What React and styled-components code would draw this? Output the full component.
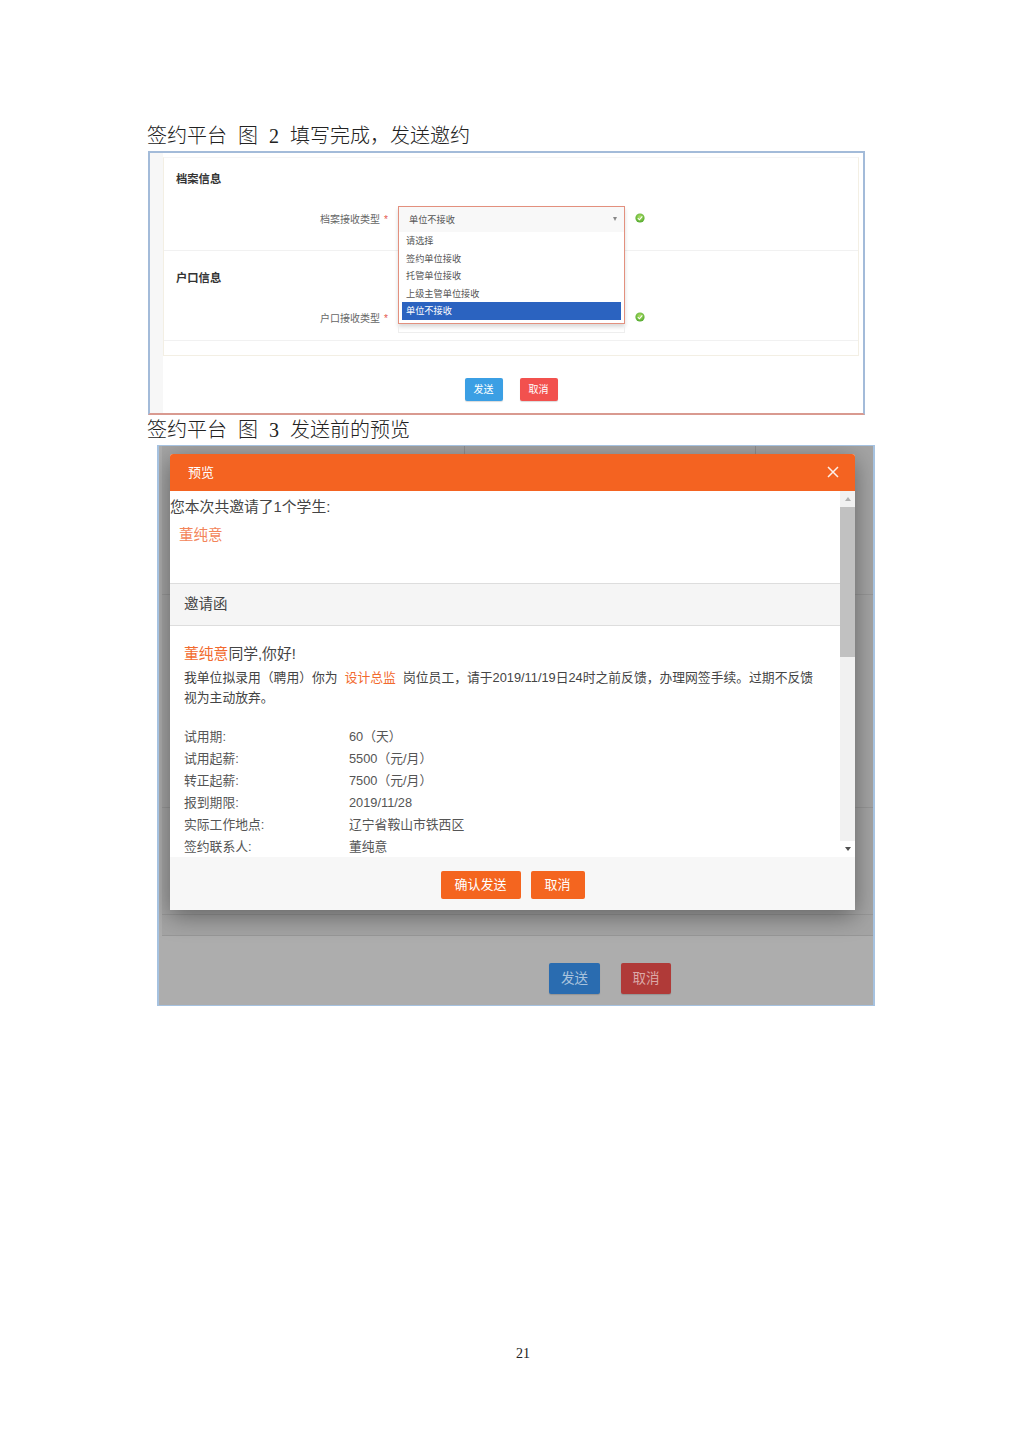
import React from "react";
import styled, { createGlobalStyle } from "styled-components";

const GlobalStyle = createGlobalStyle`
  html, body { margin: 0; padding: 0; background: #fff; }
  * { box-sizing: border-box; }
  body { font-family: "Liberation Sans", "Noto Sans CJK SC", sans-serif; color: #333; }
`;

const Page = styled.div`
  width: 1024px;
  height: 1448px;
  padding: 122px 0 0 147px;
  background: #fff;
  position: relative;
  display: flex;
  flex-direction: column;
`;

const Caption = styled.div`
  height: ${(p) => p.$h}px;
  padding-top: ${(p) => p.$pt || 0}px;
  line-height: 28px;
  font-family: "Liberation Serif", "Noto Sans CJK SC", serif;
  font-weight: 300;
  font-size: 20px;
  word-spacing: 6px;
  color: #222;
  white-space: pre;
`;

/* figure 1 */
const FormShot = styled.div`
  width: 717px;
  height: 264px;
  margin-left: 1px;
  border: 2px solid #a3bbd9;
  border-bottom-color: #d99a90;
  background: linear-gradient(to right, #f7f7f7 13px, #fff 13px);
  padding: 4px 4px 0 13px;
  display: flex;
  flex-direction: column;
  position: relative;
`;

const Panel = styled.div`
  height: 199px;
  border: 1px solid #f3efe4;
  border-top-color: #f5f5f5;
  background: #fff;
  display: flex;
  flex-direction: column;
`;

const Section = styled.div`
  height: ${(p) => p.$h}px;
  padding: 14px 12px 0;
  border-bottom: 1px solid #f1f1f1;
  margin-bottom: ${(p) => p.$mb || 0}px;
`;

const SectionTitle = styled.div`
  font-size: 11.3px;
  line-height: 14px;
  font-weight: 700;
  color: #333;
`;

const FieldRow = styled.div`
  display: flex;
  align-items: center;
  margin-top: ${(p) => p.$mt}px;
  height: 24px;
`;

const FieldLabel = styled.div`
  width: 222px;
  flex: none;
  padding-left: 144px;
  font-size: 10px;
  color: #666;
  white-space: nowrap;
`;

const Star = styled.span`
  color: #e4574c;
  margin-left: 4px;
`;

const SelectStub = styled.div`
  width: 226px;
  height: 24px;
  flex: none;
`;

const OkDot = styled.svg`
  width: 10px;
  height: 10px;
  margin-left: 11px;
  flex: none;
`;

const Actions = styled.div`
  flex: 1;
  display: flex;
  justify-content: center;
  align-items: flex-start;
  gap: ${(p) => p.$gap}px;
  padding: ${(p) => p.$pt}px 0 0 ${(p) => p.$pl || 0}px;
`;

const FlatButton = styled.div`
  width: ${(p) => p.$w}px;
  height: ${(p) => p.$h}px;
  line-height: ${(p) => p.$h}px;
  background: ${(p) => p.$bg};
  color: ${(p) => p.$fg || "#fff"};
  font-size: ${(p) => p.$fs || 10}px;
  text-align: center;
  border-radius: 2px;
  box-shadow: 0 1px 1px rgba(0, 0, 0, 0.15);
`;

const Dropdown = styled.div`
  position: absolute;
  left: 248px;
  top: 53px;
  width: 227px;
  height: 118px;
  border: 1px solid #e3907e;
  background: #fff;
  box-shadow: 0 3px 4px rgba(0, 0, 0, 0.15);
  padding: 0 3px;
`;

const DropdownBelow = styled.div`
  position: absolute;
  left: 248px;
  top: 171px;
  width: 227px;
  height: 9px;
  border: 1px solid #eee;
  border-top: 0;
`;

const SelectedRow = styled.div`
  height: 25px;
  margin: 0 -3px;
  padding: 0 10px 2px;
  background: #f8f8f8;
  display: flex;
  align-items: center;
  justify-content: space-between;
  font-size: 9.2px;
  color: #555;
`;

const Caret = styled.span`
  width: 0;
  height: 0;
  border-left: 2px solid transparent;
  border-right: 2px solid transparent;
  border-top: 4px solid #888;
  margin-right: -3px;
`;

const Option = styled.div`
  height: 17.6px;
  line-height: 19px;
  padding-left: 4px;
  font-size: 9.2px;
  color: ${(p) => (p.$active ? "#fff" : "#555")};
  background: ${(p) => (p.$active ? "#2b63c0" : "transparent")};
`;

/* figure 2 */
const PreviewShot = styled.div`
  width: 718px;
  height: 561px;
  margin-left: 10px;
  border: 2px solid #a6c2e0;
  border-width: 1px 2px;
  background: #adadad;
  position: relative;
  display: flex;
  flex-direction: column;
  overflow: hidden;
`;

const Backdrop = styled.div`
  height: 490px;
  flex: none;
  margin-left: 3px;
  background: #a4a4a4;
  display: flex;
  flex-direction: column;
`;

const BackdropRow = styled.div`
  height: ${(p) => p.$h}px;
  flex: none;
  border-bottom: 1px solid #979797;
  display: flex;
`;

const BackdropCell = styled.div`
  width: ${(p) => p.$w}px;
  flex: none;
  border-right: 1px solid #8f8f8f;
`;

const Modal = styled.div`
  position: absolute;
  left: 11px;
  top: 8px;
  width: 685px;
  height: 456px;
  background: #fff;
  border-radius: 3px 3px 0 0;
  box-shadow: 0 6px 24px rgba(0, 0, 0, 0.4);
  display: flex;
  flex-direction: column;
`;

const ModalHeader = styled.div`
  height: 37px;
  flex: none;
  background: #f46321;
  color: #fff;
  border-radius: 3px 3px 0 0;
  padding: 0 16px 2px 18px;
  display: flex;
  align-items: center;
  justify-content: space-between;
  font-size: 13px;
`;

const CloseIcon = styled.svg`
  width: 12px;
  height: 12px;
`;

const ModalBody = styled.div`
  height: 366px;
  flex: none;
  display: flex;
`;

const Scroller = styled.div`
  width: 670px;
  flex: none;
  overflow: hidden;
`;

const Intro = styled.div`
  font-size: 14.8px;
  line-height: 18px;
  padding-top: 7px;
  height: 25px;
  color: #444;
`;

const InviteeName = styled.div`
  font-size: 14.5px;
  line-height: 20px;
  padding: 9px 0 0 9px;
  height: 67px;
  color: #f3855a;
`;

const LetterHead = styled.div`
  height: 43px;
  line-height: 41px;
  background: #f5f5f5;
  border-top: 1px solid #ddd;
  border-bottom: 1px solid #ddd;
  padding-left: 14px;
  font-size: 14.5px;
  color: #444;
`;

const LetterBody = styled.div`
  padding: 18px 14px 0;
`;

const Greeting = styled.div`
  font-size: 14.8px;
  line-height: 20px;
  color: #444;
`;

const Mark = styled.span`
  color: #f26a2e;
`;

const Paragraph = styled.div`
  font-size: 12.8px;
  line-height: 20px;
  margin-top: 4px;
  color: #444;
`;

const ParagraphLine = styled.div`
  white-space: nowrap;
`;

const Terms = styled.div`
  margin-top: 18px;
`;

const Term = styled.div`
  display: flex;
  height: 22px;
  line-height: 22px;
  font-size: 12.8px;
  color: #555;
`;

const TermKey = styled.div`
  width: 165px;
  flex: none;
`;

const Scrollbar = styled.div`
  width: 15px;
  flex: none;
  background: #f1f1f1;
  display: flex;
  flex-direction: column;
  align-items: center;
`;

const ArrowCell = styled.div`
  height: 16px;
  width: 100%;
  flex: none;
  display: flex;
  align-items: center;
  justify-content: center;
  background: ${(p) => (p.$bottom ? "#fff" : "#f1f1f1")};
`;

const Arrow = styled.span`
  width: 0;
  height: 0;
  border-left: 3.5px solid transparent;
  border-right: 3.5px solid transparent;
  ${(p) => (p.$up ? "border-bottom: 4px solid #b0b0b0;" : "border-top: 4px solid #505050;")}
`;

const Thumb = styled.div`
  width: 15px;
  height: 150px;
  background: #c1c1c1;
  flex: none;
`;

const TrackRest = styled.div`
  flex: 1;
`;

const ModalFooter = styled.div`
  flex: 1;
  background: #f7f7f7;
  display: flex;
  justify-content: center;
  padding-top: 14px;
  gap: 10px;
`;

const OrangeButton = styled.div`
  width: ${(p) => p.$w}px;
  height: 28px;
  line-height: 28px;
  background: #f4651f;
  color: #fff;
  font-size: 13px;
  text-align: center;
  border-radius: 2px;
`;

const PageNumber = styled.div`
  position: absolute;
  left: 0;
  top: 1345px;
  width: 1046px;
  text-align: center;
  font-family: "Liberation Serif", serif;
  font-size: 14px;
  line-height: 18px;
  color: #222;
`;

const Check = () => (
  <OkDot viewBox="0 0 10 10">
    <defs>
      <radialGradient id="ok" cx="50%" cy="40%" r="60%">
        <stop offset="0%" stopColor="#b5e26a" />
        <stop offset="100%" stopColor="#4fa82c" />
      </radialGradient>
    </defs>
    <circle cx="5" cy="5" r="4.6" fill="url(#ok)" />
    <path d="M2.8 5.1 L4.4 6.8 L7.3 3.4" fill="none" stroke="#fff" strokeWidth="1.1" />
  </OkDot>
);

const terms = [
  ["试用期:", "60（天）"],
  ["试用起薪:", "5500（元/月）"],
  ["转正起薪:", "7500（元/月）"],
  ["报到期限:", "2019/11/28"],
  ["实际工作地点:", "辽宁省鞍山市铁西区"],
  ["签约联系人:", "董纯意"],
];

const options = ["请选择", "签约单位接收", "托管单位接收", "上级主管单位接收"];

export default function App() {
  return (
    <>
      <GlobalStyle />
      <Page>
        <Caption $h={29}>签约平台 图 2 填写完成，发送邀约</Caption>
        <FormShot>
          <Panel>
            <Section $h={93} $mb={6}>
              <SectionTitle>档案信息</SectionTitle>
              <FieldRow $mt={20}>
                <FieldLabel>
                  档案接收类型<Star>*</Star>
                </FieldLabel>
                <SelectStub />
                <Check />
              </FieldRow>
            </Section>
            <Section $h={84}>
              <SectionTitle>户口信息</SectionTitle>
              <FieldRow $mt={20}>
                <FieldLabel>
                  户口接收类型<Star>*</Star>
                </FieldLabel>
                <SelectStub />
                <Check />
              </FieldRow>
            </Section>
          </Panel>
          <Actions $gap={17} $pt={22}>
            <FlatButton $w={38} $h={23} $bg="#3b9fe4">发送</FlatButton>
            <FlatButton $w={38} $h={23} $bg="#f2514e">取消</FlatButton>
          </Actions>
          <Dropdown>
            <SelectedRow>
              单位不接收
              <Caret />
            </SelectedRow>
            {options.map((o) => (
              <Option key={o}>{o}</Option>
            ))}
            <Option $active>单位不接收</Option>
          </Dropdown>
          <DropdownBelow />
        </FormShot>
        <Caption $h={30} $pt={1}>签约平台 图 3 发送前的预览</Caption>
        <PreviewShot>
          <Backdrop>
            <BackdropRow $h={149}>
              <BackdropCell $w={303} />
              <BackdropCell $w={291} />
            </BackdropRow>
            <BackdropRow $h={213} />
            <BackdropRow $h={107} />
            <BackdropRow $h={21} />
          </Backdrop>
          <Actions $gap={21} $pt={27} $pl={188}>
            <FlatButton $w={51} $h={31} $bg="#2a6cb0" $fg="#a9c3dd" $fs={13.5}>发送</FlatButton>
            <FlatButton $w={50} $h={31} $bg="#b03a38" $fg="#dba9a8" $fs={13.5}>取消</FlatButton>
          </Actions>
          <Modal>
            <ModalHeader>
              预览
              <CloseIcon viewBox="0 0 12 12">
                <path d="M1 1 L11 11 M11 1 L1 11" stroke="#fff" strokeWidth="1.5" opacity="0.9" />
              </CloseIcon>
            </ModalHeader>
            <ModalBody>
              <Scroller>
                <Intro>您本次共邀请了1个学生:</Intro>
                <InviteeName>董纯意</InviteeName>
                <LetterHead>邀请函</LetterHead>
                <LetterBody>
                  <Greeting>
                    <Mark>董纯意</Mark>同学,你好!
                  </Greeting>
                  <Paragraph>
                    <ParagraphLine>
                      我单位拟录用（聘用）你为 <Mark>&nbsp;设计总监&nbsp;</Mark> 岗位员工，请于2019/11/19日24时之前反馈，办理网签手续。过期不反馈
                    </ParagraphLine>
                    <ParagraphLine>视为主动放弃。</ParagraphLine>
                  </Paragraph>
                  <Terms>
                    {terms.map(([k, v]) => (
                      <Term key={k}>
                        <TermKey>{k}</TermKey>
                        {v}
                      </Term>
                    ))}
                  </Terms>
                </LetterBody>
              </Scroller>
              <Scrollbar>
                <ArrowCell>
                  <Arrow $up />
                </ArrowCell>
                <Thumb />
                <TrackRest />
                <ArrowCell $bottom>
                  <Arrow />
                </ArrowCell>
              </Scrollbar>
            </ModalBody>
            <ModalFooter>
              <OrangeButton $w={80}>确认发送</OrangeButton>
              <OrangeButton $w={54}>取消</OrangeButton>
            </ModalFooter>
          </Modal>
        </PreviewShot>
        <PageNumber>21</PageNumber>
      </Page>
    </>
  );
}
